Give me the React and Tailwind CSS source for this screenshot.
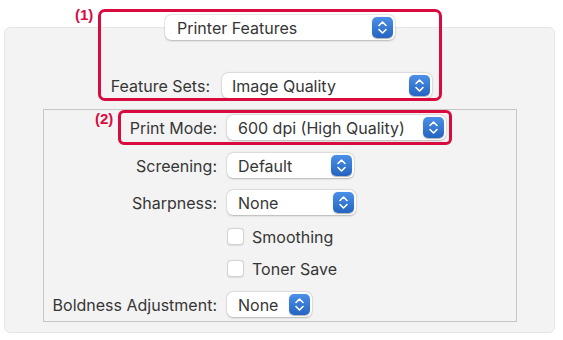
import React from "react";

const font = { fontFamily: "Inter, 'Liberation Sans', sans-serif" };

function Stepper() {
  return (
    <span className="w-[21px] h-[21px] rounded-[5px] bg-gradient-to-b from-[#4b90e8] to-[#2564c0] flex items-center justify-center shadow-[0_0.5px_1px_rgba(0,0,0,0.3)]">
      <svg width="21" height="21" viewBox="0 0 21 21" fill="none">
        <path d="M7 8.5 L10.5 5 L14 8.5" stroke="white" strokeWidth="1.6" strokeLinecap="round" strokeLinejoin="round" />
        <path d="M7 12.5 L10.5 16 L14 12.5" stroke="white" strokeWidth="1.6" strokeLinecap="round" strokeLinejoin="round" />
      </svg>
    </span>
  );
}

function Popup({ label, width, pl = "pl-[11px]" }) {
  return (
    <div
      className={`h-[25px] bg-white rounded-[6px] flex items-center justify-between ${pl} pr-[2px] shadow-[0_0.5px_2px_rgba(0,0,0,0.22),0_0_0_0.5px_rgba(0,0,0,0.08)]`}
      style={{ width }}
    >
      <span className="text-[16px] text-[#363636] leading-none whitespace-nowrap">{label}</span>
      <Stepper />
    </div>
  );
}

function Row({ label, children, className = "" }) {
  return (
    <div className={`flex items-center ${className}`}>
      <div className="w-[173px] text-right text-[16px] text-[#363636] leading-none whitespace-nowrap">{label}</div>
      <div className="ml-[10px]">{children}</div>
    </div>
  );
}

function Check({ label, className = "" }) {
  return (
    <div className={`flex items-center ml-[183px] h-[17px] ${className}`}>
      <span className="w-[17px] h-[17px] rounded-[4px] bg-white border border-[#d2d2d2] shadow-[0_0.5px_1px_rgba(0,0,0,0.1)]" />
      <span className="ml-[8px] text-[16px] text-[#363636] leading-none">{label}</span>
    </div>
  );
}

export default function App() {
  return (
    <div className="relative w-[563px] h-[340px] bg-white overflow-hidden" style={font}>
      <div className="relative z-10 pt-[15px] pl-[165px]">
        <Popup label="Printer Features" width={230} pl="pl-[12px]" />
      </div>

      <div className="-mt-[13px] ml-[4px] w-[551px] h-[306px] rounded-[6px] border border-[#e6e6e6] bg-[#f3f3f3] pt-[45px]">
        <div className="flex items-center">
          <div className="w-[205px] text-right text-[16px] text-[#363636] leading-none">Feature Sets:</div>
          <div className="ml-[12px]">
            <Popup label="Image Quality" width={210} pl="pl-[10px]" />
          </div>
        </div>

        <div className="mt-[11px] ml-[38px] w-[474px] h-[213px] border border-[#c6c6c6] pt-[5px]">
          <Row label="Print Mode:">
            <Popup label="600 dpi (High Quality)" width={219} />
          </Row>
          <Row label="Screening:" className="mt-[13px]">
            <Popup label="Default" width={127} />
          </Row>
          <Row label="Sharpness:" className="mt-[12px]">
            <Popup label="None" width={129} />
          </Row>
          <Check label="Smoothing" className="mt-[13px]" />
          <Check label="Toner Save" className="mt-[15px]" />
          <Row label="Boldness Adjustment:" className="mt-[15px]">
            <Popup label="None" width={85} />
          </Row>
        </div>
      </div>

      {/* annotation frames */}
      <div className="absolute left-[98px] top-[9px] w-[344px] h-[92px] border-[3px] border-[#d80b3f] rounded-[7px]" />
      <div className="absolute left-[118px] top-[110px] w-[334px] h-[35px] border-[3px] border-[#d80b3f] rounded-[6px]" />
      <span
        className="absolute left-[75px] top-[7px] text-[15px] font-bold text-[#d80b3f] leading-none"
        style={{ fontFamily: "'Liberation Sans', Arial, sans-serif" }}
      >
        (1)
      </span>
      <span
        className="absolute left-[95px] top-[111px] text-[15px] font-bold text-[#d80b3f] leading-none"
        style={{ fontFamily: "'Liberation Sans', Arial, sans-serif" }}
      >
        (2)
      </span>
    </div>
  );
}
